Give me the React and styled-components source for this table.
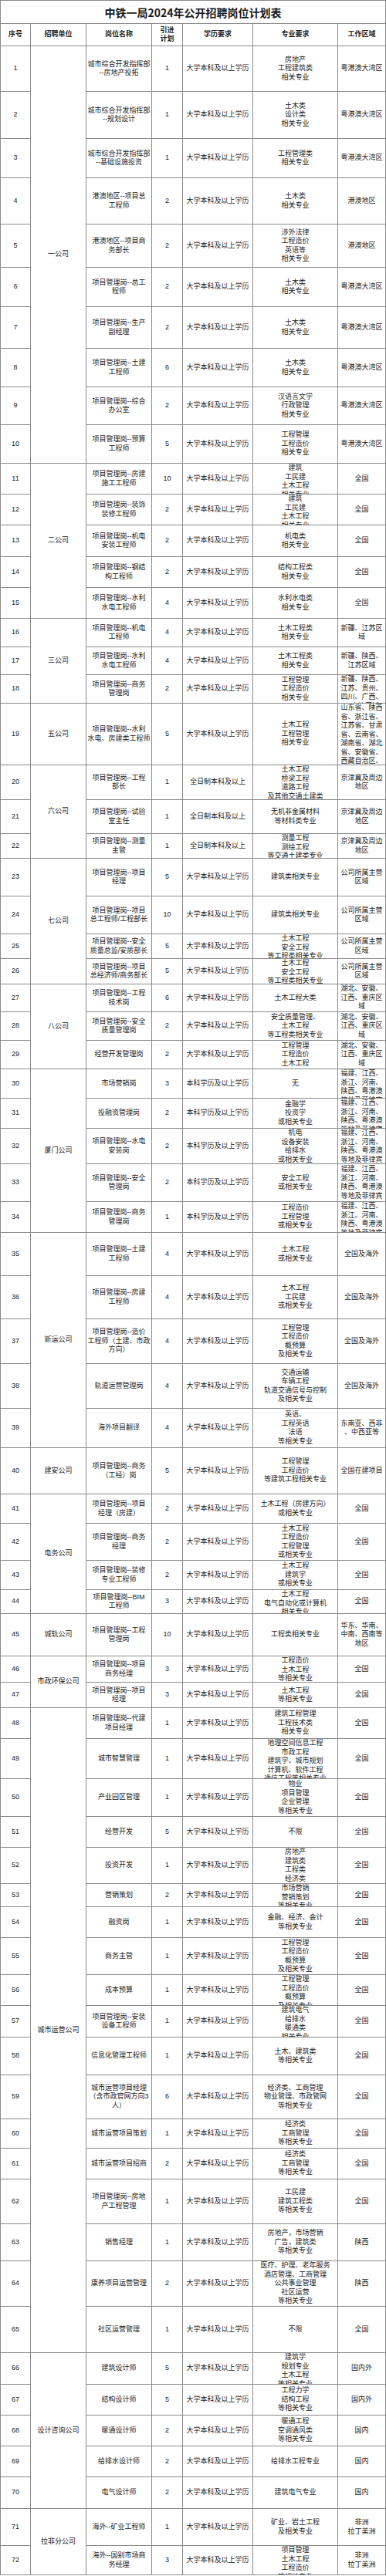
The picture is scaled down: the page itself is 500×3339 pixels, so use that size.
import React from 'react'
import styled, { createGlobalStyle } from 'styled-components'

const GlobalStyle = createGlobalStyle`
    html, body {
        margin: 0;
        padding: 0;
        background: #ffffff;
    }
    body {
        font-family: "Liberation Sans", "Noto Sans CJK SC", sans-serif;
        color: #222222;
    }
`

// y position of every horizontal rule, measured from the sheet
const LINES = [
    0, 30, 59, 118, 179, 230, 290, 346, 397, 451, 501, 550, 600, 640, 680, 721, 761, 801, 838,
    874, 911, 991, 1036, 1080, 1112, 1161, 1210, 1242, 1275, 1311, 1348, 1385, 1423, 1462,
    1508, 1557, 1597, 1653, 1709, 1767, 1825, 1876, 1936, 1974, 2022, 2060, 2091, 2146, 2180,
    2213, 2253, 2305, 2354, 2394, 2441, 2471, 2511, 2559, 2599, 2640, 2689, 2746, 2784, 2824,
    2882, 2930, 2989, 3049, 3090, 3130, 3170, 3210, 3251, 3299, 3337,
]

const BK = '大学本科及以上学历'
const QR = '全日制本科及以上'
const BX = '本科学历及以上学历'
const WAN = ['粤港澳大湾区']
const QG = ['全国']
const XM = ['福建、江西、', '浙江、河南、', '陕西、粤港澳', '等地及菲律宾']
const QZ = ['公司所属主营', '区域']
const HB = ['湖北、安徽、', '江西、重庆区', '域']
const JJJ = ['京津冀及周边', '地区']
const HW = ['全国及海外']

const groups = [
    { unit: '一公司', rows: [
        [['城市综合开发指挥部', '--房地产投拓'], 1, BK, ['房地产', '工程建筑类', '相关专业'], WAN],
        [['城市综合开发指挥部', '--规划设计'], 1, BK, ['土木类', '设计类', '相关专业'], WAN],
        [['城市综合开发指挥部', '--基础设施投资'], 1, BK, ['工程管理类', '相关专业'], WAN],
        [['港澳地区--项目总', '工程师'], 2, BK, ['土木类', '相关专业'], ['港澳地区']],
        [['港澳地区--项目商', '务部长'], 2, BK, ['涉外法律', '工程造价', '英语等', '相关专业'], ['港澳地区']],
        [['项目管理岗--总工', '程师'], 2, BK, ['土木类', '相关专业'], WAN],
        [['项目管理岗--生产', '副经理'], 2, BK, ['土木类', '相关专业'], WAN],
        [['项目管理岗--土建', '工程师'], 6, BK, ['土木类', '相关专业'], WAN],
        [['项目管理岗--综合', '办公室'], 2, BK, ['汉语言文学', '行政管理', '相关专业'], WAN],
        [['项目管理岗--预算', '工程师'], 5, BK, ['工程管理', '工程造价', '相关专业'], WAN],
    ] },
    { unit: '二公司', rows: [
        [['项目管理岗--房建', '施工工程师'], 10, BK, ['建筑', '工民建', '土木工程', '相关专业'], QG],
        [['项目管理岗--装饰', '装修工程师'], 2, BK, ['建筑', '工民建', '土木工程', '相关专业'], QG],
        [['项目管理岗--机电', '安装工程师'], 2, BK, ['机电类', '相关专业'], QG],
        [['项目管理岗--钢结', '构工程师'], 2, BK, ['结构工程类', '相关专业'], QG],
        [['项目管理岗--水利', '水电工程师'], 4, BK, ['水利水电类', '相关专业'], QG],
    ] },
    { unit: '三公司', rows: [
        [['项目管理岗--机电', '工程师'], 4, BK, ['土木工程类', '相关专业'], ['新疆、江苏区', '域']],
        [['项目管理岗--水利', '水电工程师'], 4, BK, ['土木工程类', '相关专业'], ['新疆、陕西、', '江苏区域']],
        [['项目管理岗--商务', '管理岗'], 2, BK, ['工程管理', '工程造价', '相关专业'],
            ['新疆、陕西、', '江苏、贵州、', '四川、广西、', '云南等区域']],
    ] },
    { unit: '五公司', rows: [
        [['项目管理岗--水利', '水电、房建类工程师'], 5, BK, ['土木工程', '工程管理', '相关专业'],
            ['山东省、陕西', '省、浙江省、', '江苏省、甘肃', '省、云南省、', '湖南省、湖北', '省、安徽省、', '西藏自治区、', '四川省等']],
    ] },
    { unit: '六公司', rows: [
        [['项目管理岗--工程', '部长'], 1, QR, ['土木工程', '桥梁工程', '道路工程', '及其他交通土建类'], JJJ],
        [['项目管理岗--试验', '室主任'], 1, QR, ['无机非金属材料', '等材料类专业'], JJJ],
        [['项目管理岗--测量', '主管'], 1, QR, ['测量工程', '测绘工程', '等交通土建类专业'], JJJ],
    ] },
    { unit: '七公司', rows: [
        [['项目管理岗--项目', '经理'], 5, BK, ['建筑类相关专业'], QZ],
        [['项目管理岗--项目', '总工程师/工程部长'], 10, BK, ['建筑类相关专业'], QZ],
        [['项目管理岗--安全', '质量总监/安质部长'], 5, BK, ['土木工程', '安全工程', '等工程类相关专业'], QZ],
        [['项目管理岗--项目', '总经济师/商务部长'], 5, BK, ['土木工程', '安全工程', '等工程类相关专业'], QZ],
    ] },
    { unit: '八公司', rows: [
        [['项目管理岗--工程', '技术岗'], 6, BK, ['土木工程大类'], HB],
        [['项目管理岗--安全', '质量管理岗'], 2, BK, ['安全质量管理、', '土木工程', '等工程类相关专业'], HB],
        [['经营开发管理岗'], 2, BK, ['工程管理', '工程造价', '土木工程'], HB],
    ] },
    { unit: '厦门公司', rows: [
        [['市场营销岗'], 3, BX, ['无'], XM],
        [['投融资管理岗'], 2, BX, ['金融学', '投资学', '或相关专业'], XM],
        [['项目管理岗--水电', '安装岗'], 2, BX, ['机电', '设备安装', '给排水', '或相关专业'], XM],
        [['项目管理岗--安全', '管理岗'], 2, BX, ['安全工程', '或相关专业'], XM],
        [['项目管理岗--商务', '管理岗'], 1, BX, ['工程造价', '工程管理', '或相关专业'], XM],
    ] },
    { unit: '新运公司', rows: [
        [['项目管理岗--土建', '工程师'], 4, BK, ['土木工程', '或相关专业'], HW],
        [['项目管理岗--房建', '工程师'], 4, BK, ['土木工程', '工民建', '或相关专业'], HW],
        [['项目管理岗--造价', '工程师（土建、市政', '方向）'], 4, BK, ['工程管理', '工程造价', '概预算', '及相关专业'], HW],
        [['轨道运营管理岗'], 4, BK, ['交通运输', '车辆工程', '轨道交通信号与控制', '及相关专业'], HW],
        [['海外项目翻译'], 4, BK, ['英语、', '工程英语', '法语', '等相关专业'], ['东南亚、西非', '、中西亚等']],
    ] },
    { unit: '建安公司', rows: [
        [['项目管理岗--商务', '（工经）岗'], 5, BK, ['工程管理', '工程造价', '等建筑工程相关专业'], ['全国在建项目']],
    ] },
    { unit: '电务公司', rows: [
        [['项目管理岗--项目', '经理（房建）'], 2, BK, ['土木工程（房建方向）', '或相关专业'], QG],
        [['项目管理岗--商务', '经理'], 2, BK, ['土木工程', '工程造价', '工程管理', '或相关专业'], QG],
        [['项目管理岗--装修', '专业工程师'], 2, BK, ['土木工程', '建筑学', '或相关专业'], QG],
        [['项目管理岗--BIM', '工程师'], 3, BK, ['土木工程', '电气自动化或计算机', '相关专业'], QG],
    ] },
    { unit: '城轨公司', rows: [
        [['项目管理岗--工程', '管理岗'], 10, BK, ['工程类相关专业'], ['华东、华南、', '中南、西南等', '地区']],
    ] },
    { unit: '市政环保公司', rows: [
        [['项目管理岗--项目', '商务经理'], 3, BK, ['工程造价', '土木工程', '等相关专业'], QG],
        [['项目管理岗--项目', '经理'], 3, BK, ['土木工程', '等相关专业'], QG],
    ] },
    { unit: '城市运营公司', rows: [
        [['项目管理岗--代建', '项目经理'], 1, BK, ['建筑工程管理', '工程技术类', '相关专业'], QG],
        [['城市智慧管理'], 1, BK, ['地理空间信息工程', '市政工程', '建筑学、城市规划', '计算机、软件工程', '通信工程等相关专业'], QG],
        [['产业园区管理'], 1, BK, ['物业', '项目管理', '企业管理', '等相关专业'], QG],
        [['经营开发'], 5, BK, ['不限'], QG],
        [['投资开发'], 1, BK, ['房地产', '建筑类', '工程类', '经济类'], QG],
        [['营销策划'], 2, BK, ['市场营销', '营销策划', '等相关专业'], QG],
        [['融资岗'], 1, BK, ['金融、经济、会计', '等相关专业'], QG],
        [['商务主管'], 1, BK, ['工程管理', '工程造价', '概预算', '及相关专业'], QG],
        [['成本预算'], 1, BK, ['工程管理', '工程造价', '概预算', '及相关专业'], QG],
        [['项目管理岗--安装', '设备工程师'], 1, BK, ['建筑电气', '给排水', '暖通类', '相关专业'], QG],
        [['信息化管理工程师'], 1, BK, ['土木、建筑类', '等相关专业'], QG],
        [['城市运营项目经理', '（含市政官网方向3', '人）'], 6, BK, ['经济类、工商管理', '物业管理、市政管网', '等相关专业'], QG],
        [['城市运营项目策划'], 1, BK, ['经济类', '工商管理', '等相关专业'], QG],
        [['城市运营项目招商'], 2, BK, ['经济类', '工商管理', '等相关专业'], QG],
        [['项目管理岗--房地', '产工程管理'], 1, BK, ['工民建', '建筑工程类', '等相关专业'], QG],
        [['销售经理'], 1, BK, ['房地产，市场营销', '广告，建筑类', '等相关专业'], ['陕西']],
        [['康养项目运营管理'], 2, BK, ['医疗、护理、老年服务', '酒店管理、工商管理', '公共事业管理', '社区运营', '等相关专业'], ['陕西']],
        [['社区运营管理'], 1, BK, ['不限'], QG],
    ] },
    { unit: '设计咨询公司', rows: [
        [['建筑设计师'], 5, BK, ['建筑学', '规划专业', '土木工程', '等相关专业'], ['国内外']],
        [['结构设计师'], 5, BK, ['工程力学', '结构工程', '等相关专业'], ['国内外']],
        [['暖通设计师'], 2, BK, ['暖通工程', '空调通风类', '等相关专业'], ['国内']],
        [['给排水设计师'], 2, BK, ['给排水工程专业'], ['国内']],
        [['电气设计师'], 2, BK, ['建筑电气专业'], ['国内']],
    ] },
    { unit: '拉非分公司', rows: [
        [['海外--矿业工程师'], 1, BK, ['矿业、岩土工程', '及相关专业'], ['非洲', '拉丁美洲']],
        [['海外--国别市场商', '务经理'], 3, BK, ['项目管理', '土木工程', '工程造价', '等相关专业'], ['非洲', '拉丁美洲']],
    ] },
]

const Sheet = styled.div`
    display: grid;
    grid-template-columns: 38px 71px 84px 39px 90px 109px 61px;
    grid-template-rows: ${(p) => p.$rows};
    gap: 1px;
    padding: 1px;
    width: 500px;
    box-sizing: border-box;
    background: #8a8a8a;
`

const Title = styled.div`
    grid-column: 1 / -1;
    display: flex;
    align-items: center;
    justify-content: center;
    background: #ffffff;
    font-family: "Noto Sans CJK SC", "Liberation Sans", sans-serif;
    font-size: 14px;
    font-weight: 700;
    color: #1a1a1a;
`

const Cell = styled.div`
    display: flex;
    flex-direction: column;
    align-items: center;
    overflow: hidden;
    min-height: 0;
    background: #ffffff;
    font-size: 9px;
    line-height: 11.5px;
    font-weight: ${(p) => (p.$head ? 700 : 400)};
    grid-row: ${(p) => (p.$span ? `span ${p.$span}` : 'auto')};
`

// auto margins centre the text but keep it pinned to the top when it overflows
const Lines = styled.div`
    margin: auto 0;
    display: flex;
    flex-direction: column;
    align-items: center;
`

const Line = styled.span`
    white-space: nowrap;
`

function Text({ lines }) {
    return (
        <Lines>
            {lines.map((l, i) => <Line key={i}>{l}</Line>)}
        </Lines>
    )
}

const HEAD = [['序号'], ['招聘单位'], ['岗位名称'], ['引进', '计划'], ['学历要求'], ['专业要求'], ['工作区域']]

function App() {
    const rows = LINES.slice(1).map((y, i) => `${y - LINES[i] - 1}px`).join(' ')
    let seq = 0

    return (
        <>
            <GlobalStyle />
            <Sheet $rows={rows}>
                <Title>中铁一局2024年公开招聘岗位计划表</Title>
                {HEAD.map((h, i) => <Cell key={`h${i}`} $head><Text lines={h} /></Cell>)}
                {groups.map((g) => g.rows.map(([name, count, edu, major, area], j) => {
                    seq += 1
                    return (
                        <React.Fragment key={seq}>
                            <Cell><Text lines={[String(seq)]} /></Cell>
                            {j === 0 && <Cell $span={g.rows.length}><Text lines={[g.unit]} /></Cell>}
                            <Cell><Text lines={name} /></Cell>
                            <Cell><Text lines={[String(count)]} /></Cell>
                            <Cell><Text lines={[edu]} /></Cell>
                            <Cell><Text lines={major} /></Cell>
                            <Cell><Text lines={area} /></Cell>
                        </React.Fragment>
                    )
                }))}
            </Sheet>
        </>
    )
}

export default App
